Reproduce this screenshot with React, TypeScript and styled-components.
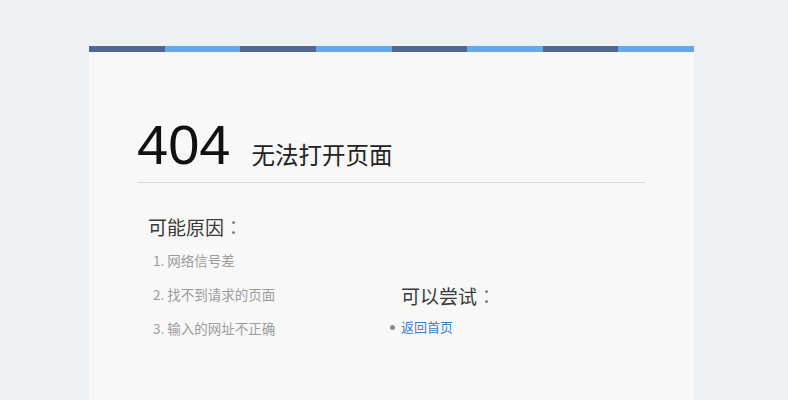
import React from "react";
import styled, { createGlobalStyle } from "styled-components";

const GlobalStyle = createGlobalStyle`
  html, body {
    margin: 0;
    padding: 0;
    background: #eef0f2;
    overflow: hidden;
  }
  body {
    font-family: "Liberation Sans", "Noto Sans CJK SC", sans-serif;
  }
  * { box-sizing: border-box; }
`;

const Page = styled.div`
  padding: 46px 0 0 89px;
`;

const Card = styled.div`
  width: 605px;
  min-height: calc(100vh - 46px);
  background: #f8f8f8;
`;

const Stripe = styled.div`
  display: flex;
  height: 6px;
`;

const Segment = styled.div<{ $dark: boolean }>`
  flex: 1;
  background: ${(p) => (p.$dark ? "#4e6798" : "#62a9f0")};
`;

const Content = styled.div`
  padding: 0 49px;
`;

const TitleRow = styled.div`
  display: flex;
  align-items: baseline;
  margin-top: 65px;
  padding-bottom: 9px;
  border-bottom: 1px solid #d9d9d9;
`;

const Code = styled.span`
  font-family: "Liberation Sans", sans-serif;
  font-size: 56px;
  line-height: 56px;
  color: #111;
  margin-left: -1px;
`;

const Headline = styled.span`
  font-family: "Noto Sans CJK SC", sans-serif;
  font-size: 23.5px;
  line-height: 30px;
  color: #222;
  margin-left: 21px;
`;

const Columns = styled.div`
  display: flex;
`;

const Column = styled.div<{ $width?: string; $top: number; $indent: number }>`
  width: ${(p) => p.$width ?? "auto"};
  margin-top: ${(p) => p.$top}px;
  padding-left: ${(p) => p.$indent}px;
`;

const Heading = styled.h2<{ $lh: number; $indent?: number }>`
  margin: 0;
  padding-left: ${(p) => p.$indent ?? 0}px;
  font-family: "Noto Sans CJK SC", sans-serif;
  font-weight: normal;
  font-size: 19px;
  line-height: ${(p) => p.$lh}px;
  color: #3a3a3a;
`;

const Colon = styled.span`
  font-family: "Noto Sans CJK TC", sans-serif;
  color: #777;
`;

const ReasonList = styled.ol`
  list-style: none;
  margin: 4px 0 0;
  padding: 0 0 0 5px;
`;

const Reason = styled.li`
  font-family: "Noto Sans CJK SC", sans-serif;
  font-size: 13.5px;
  line-height: 34px;
  color: #9c9c9c;
`;

const TryList = styled.ul`
  list-style: none;
  margin: 0;
  padding: 0;
`;

const TryItem = styled.li`
  display: flex;
  align-items: center;
  gap: 6px;
  line-height: 34px;
`;

const Dot = styled.span`
  width: 5px;
  height: 5px;
  border-radius: 50%;
  background: #8a8a8a;
  flex: none;
`;

const Link = styled.a`
  font-family: "Noto Sans CJK SC", sans-serif;
  font-size: 13px;
  color: #3f82c8;
  text-decoration: none;
`;

const reasons = ["1. 网络信号差", "2. 找不到请求的页面", "3. 输入的网址不正确"];

export default function App() {
  return (
    <>
      <GlobalStyle />
      <Page>
        <Card>
          <Stripe>
            {Array.from({ length: 8 }).map((_, i) => (
              <Segment key={i} $dark={i % 2 === 0} />
            ))}
          </Stripe>
          <Content>
            <TitleRow>
              <Code>404</Code>
              <Headline>无法打开页面</Headline>
            </TitleRow>
            <Columns>
              <Column $width="252px" $top={32} $indent={10}>
                <Heading $lh={24}>
                  可能原因<Colon>：</Colon>
                </Heading>
                <ReasonList>
                  {reasons.map((r) => (
                    <Reason key={r}>{r}</Reason>
                  ))}
                </ReasonList>
              </Column>
              <Column $top={99} $indent={0}>
                <Heading $lh={28} $indent={11}>
                  可以尝试<Colon>：</Colon>
                </Heading>
                <TryList>
                  <TryItem>
                    <Dot />
                    <Link href="#">返回首页</Link>
                  </TryItem>
                </TryList>
              </Column>
            </Columns>
          </Content>
        </Card>
      </Page>
    </>
  );
}
